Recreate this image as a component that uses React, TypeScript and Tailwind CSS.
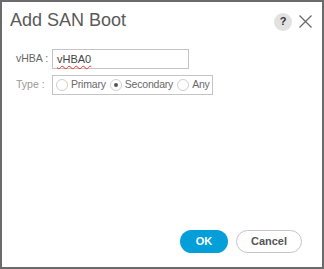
export default function App() {
  const options = [
    { label: 'Primary', checked: false },
    { label: 'Secondary', checked: true },
    { label: 'Any', checked: false },
  ];

  return (
    <div className="w-[324px] h-[269px] bg-white border-2 border-[#6b6b6b] flex flex-col font-['Liberation_Sans',Arial,sans-serif] text-[#4a4a4a]">
      <div className="flex items-center justify-between pl-[8px] pr-[9px] pt-[3px] h-[36px]">
        <h1 className="text-[18px] text-[#5a5a5a] mb-[3px]">Add SAN Boot</h1>
        <div className="flex items-center gap-[6px]">
          <div className="w-[18px] h-[18px] rounded-full bg-[#e2e2e2] flex items-center justify-center text-[11px] font-bold text-[#333]">?</div>
          <svg width="15" height="15" viewBox="0 0 15 15" className="text-[#6a6a6a]">
            <path d="M1.5 1.5L13.5 13.5M13.5 1.5L1.5 13.5" stroke="currentColor" strokeWidth="1.3" />
          </svg>
        </div>
      </div>

      <div className="flex flex-col gap-[6px] pl-[14px] pt-[11px]">
        <div className="flex items-center">
          <span className="w-[36px] text-[10.5px] text-[#666]">vHBA :</span>
          <div className="w-[137px] h-[20px] border border-[#c4c4c4] flex items-center px-[4px] text-[11px] text-[#444]">
            <span className="underline decoration-wavy decoration-[#e33] decoration-[1px] underline-offset-[2px]">vHBA0</span>
          </div>
        </div>
        <div className="flex items-center">
          <span className="w-[36px] text-[10.5px] text-[#999]">Type :</span>
          <div className="w-[161px] h-[20px] border border-[#c4c4c4] flex items-center pl-[3px] gap-[4px] text-[10.5px] text-[#6a6a6a] tracking-[-0.2px]">
            {options.map((o) => (
              <label key={o.label} className="flex items-center gap-[3px]">
                <span className="w-[12px] h-[12px] rounded-full border border-[#cfcfcf] flex items-center justify-center">
                  {o.checked && <span className="w-[4px] h-[4px] rounded-full bg-[#555]" />}
                </span>
                {o.label}
              </label>
            ))}
          </div>
        </div>
      </div>

      <div className="mt-auto flex justify-end gap-[8px] pr-[20px] pb-[14px]">
        <button className="w-[48px] h-[23px] rounded-full bg-[#049fd9] text-white text-[11px] font-bold">OK</button>
        <button className="w-[66px] h-[23px] rounded-full border border-[#c5c5c5] bg-white text-[#555] text-[11px] font-bold">Cancel</button>
      </div>
    </div>
  );
}
